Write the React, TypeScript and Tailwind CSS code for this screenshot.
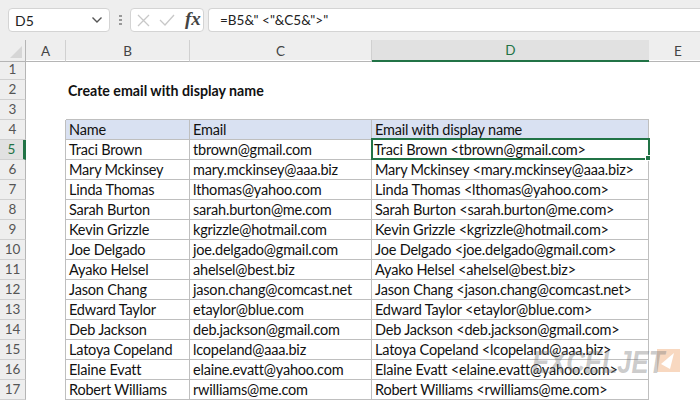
const rows = [
  ["Traci Brown", "tbrown@gmail.com"],
  ["Mary Mckinsey", "mary.mckinsey@aaa.biz"],
  ["Linda Thomas", "lthomas@yahoo.com"],
  ["Sarah Burton", "sarah.burton@me.com"],
  ["Kevin Grizzle", "kgrizzle@hotmail.com"],
  ["Joe Delgado", "joe.delgado@gmail.com"],
  ["Ayako Helsel", "ahelsel@best.biz"],
  ["Jason Chang", "jason.chang@comcast.net"],
  ["Edward Taylor", "etaylor@blue.com"],
  ["Deb Jackson", "deb.jackson@gmail.com"],
  ["Latoya Copeland", "lcopeland@aaa.biz"],
  ["Elaine Evatt", "elaine.evatt@yahoo.com"],
  ["Robert Williams", "rwilliams@me.com"],
];

const columns = "grid grid-cols-[26px_40px_124px_182px_277px_1fr]";

function RowHead({ n, active }: { n: number; active?: boolean }) {
  return (
    <div
      className={`h-5 flex items-center justify-center border-b border-[#d0d0d0] text-[13.5px] ${
        active
          ? "bg-[#e1e1e1] text-[#217346] border-r-[3px] border-r-[#217346]"
          : "bg-[#eeeeee] text-[#555555] border-r border-r-[#b5b5b5]"
      }`}
    >
      {n}
    </div>
  );
}

function Cell({ children, head }: { children?: React.ReactNode; head?: boolean }) {
  return (
    <div
      className={`h-5 pl-[3px] pt-px flex items-center whitespace-nowrap overflow-hidden border-b border-r border-[#bfbfbf] text-[14.5px] tracking-[-0.2px] text-[#111111] ${
        head ? "bg-[#d9e1f2]" : "bg-white"
      }`}
    >
      {children}
    </div>
  );
}

export default function App() {
  return (
    <div className="w-[700px] h-[400px] overflow-hidden relative bg-white font-['Lato','Liberation_Sans',sans-serif]">
      {/* formula bar */}
      <div className="h-10 bg-[#eeeeee] pt-2 flex items-start">
        <div className="ml-2 w-[102px] h-6 bg-white border border-[#d4d4d4] rounded-[4px] flex items-center justify-between pl-[6px] pr-[6px] text-[14px] text-[#222222]">
          <span>D5</span>
          <svg width="12" height="8" viewBox="0 0 12 8" fill="none" stroke="#555555" strokeWidth="1.4">
            <path d="M1.5 1.5 L6 6 L10.5 1.5" />
          </svg>
        </div>
        <div className="w-5 h-6 flex flex-col items-center justify-center gap-[2px]">
          <span className="w-[3px] h-[2px] bg-[#999999]" />
          <span className="w-[3px] h-[2px] bg-[#999999]" />
          <span className="w-[3px] h-[2px] bg-[#999999]" />
        </div>
        <div className="w-[74px] h-6 bg-white border border-[#d4d4d4] rounded-[4px] flex items-center pl-[6px] gap-[9px]">
          <svg width="13" height="13" viewBox="0 0 13 13" fill="none" stroke="#c8c8c8" strokeWidth="1.3">
            <path d="M1 1 L12 12 M12 1 L1 12" />
          </svg>
          <svg width="16" height="12" viewBox="0 0 16 12" fill="none" stroke="#c8c8c8" strokeWidth="1.3">
            <path d="M1 6 L6 11 L15 1" />
          </svg>
          <span className="font-['Liberation_Serif',serif] italic font-bold text-[19px] leading-none text-[#444444] ml-px -mt-[3px]">
            fx
          </span>
        </div>
        <div className="ml-1 flex-1 h-6 bg-white border-y border-l border-[#d4d4d4] rounded-l-[4px] flex items-center pl-[11px] text-[13.5px] text-[#222222] whitespace-pre">
          {'=B5&" <"&C5&">"'}
        </div>
      </div>

      {/* column headers */}
      <div className={`${columns} h-5 bg-[#eeeeee] text-[13.5px] text-[#444444]`}>
        <div className="border-b border-r border-[#b5b5b5] relative overflow-hidden">
          <div className="absolute right-[3px] bottom-[3px] w-0 h-0 border-l-[12px] border-l-transparent border-b-[12px] border-b-[#d6d6d6]" />
        </div>
        <div className="flex items-center justify-center border-b border-r border-[#b5b5b5] border-r-[#d0d0d0]">A</div>
        <div className="flex items-center justify-center border-b border-r border-[#b5b5b5] border-r-[#d0d0d0]">B</div>
        <div className="flex items-center justify-center border-b border-r border-[#b5b5b5] border-r-[#d0d0d0]">C</div>
        <div className="flex items-center justify-center bg-[#e1e1e1] text-[#217346] border-b-2 border-[#217346]">D</div>
        <div className="flex items-center border-b border-[#b5b5b5] pl-[25px]">E</div>
      </div>

      {/* sheet */}
      <div className={columns}>
        <RowHead n={1} />
        <div className="col-span-5" />
        <RowHead n={2} />
        <div />
        <div className="col-span-4 h-5 pl-[2px] pt-px flex items-center font-bold text-[14.2px] text-[#111111]">
          Create email with display name
        </div>
        <RowHead n={3} />
        <div className="col-span-5 border-b border-[#bfbfbf] ml-10 mr-[51px]" />
        <RowHead n={4} />
        <div />
        <div className="border-l border-[#bfbfbf] -ml-px"><Cell head>Name</Cell></div>
        <Cell head>Email</Cell>
        <Cell head>Email with display name</Cell>
        <div />
        {rows.map((r, i) => (
          <div key={r[0]} className="contents">
            <RowHead n={i + 5} active={i === 0} />
            <div />
            <div className="border-l border-[#bfbfbf] -ml-px"><Cell>{r[0]}</Cell></div>
            <Cell>{r[1]}</Cell>
            {i === 0 ? (
              <div className="h-[22px] -mt-[2px] -ml-px -mr-px relative border-2 border-[#217346] pl-px pt-px flex items-center whitespace-nowrap text-[14.5px] tracking-[-0.2px] text-[#111111] bg-white">
                {`${r[0]} <${r[1]}>`}
                <span className="absolute -right-[3px] -bottom-[3px] w-[6px] h-[6px] bg-[#217346] border border-white" />
              </div>
            ) : (
              <Cell>{`${r[0]} <${r[1]}>`}</Cell>
            )}
            <div />
          </div>
        ))}
      </div>

      {/* watermark */}
      <div className="absolute left-[532px] top-[348px] flex items-start pointer-events-none">
        <span className="w-[125px] origin-left scale-x-[0.8] font-['Liberation_Sans',sans-serif] font-bold italic text-[32px] leading-[28px] whitespace-nowrap text-[#777777]/40">
          EXCELJET
        </span>
        <svg width="23" height="23" viewBox="0 0 23 23" className="mt-px">
          <rect width="23" height="23" fill="#f8d8c0" />
          <path d="M17 4 L4 15 L13 20 Z" fill="#ffffff" />
        </svg>
      </div>
    </div>
  );
}
